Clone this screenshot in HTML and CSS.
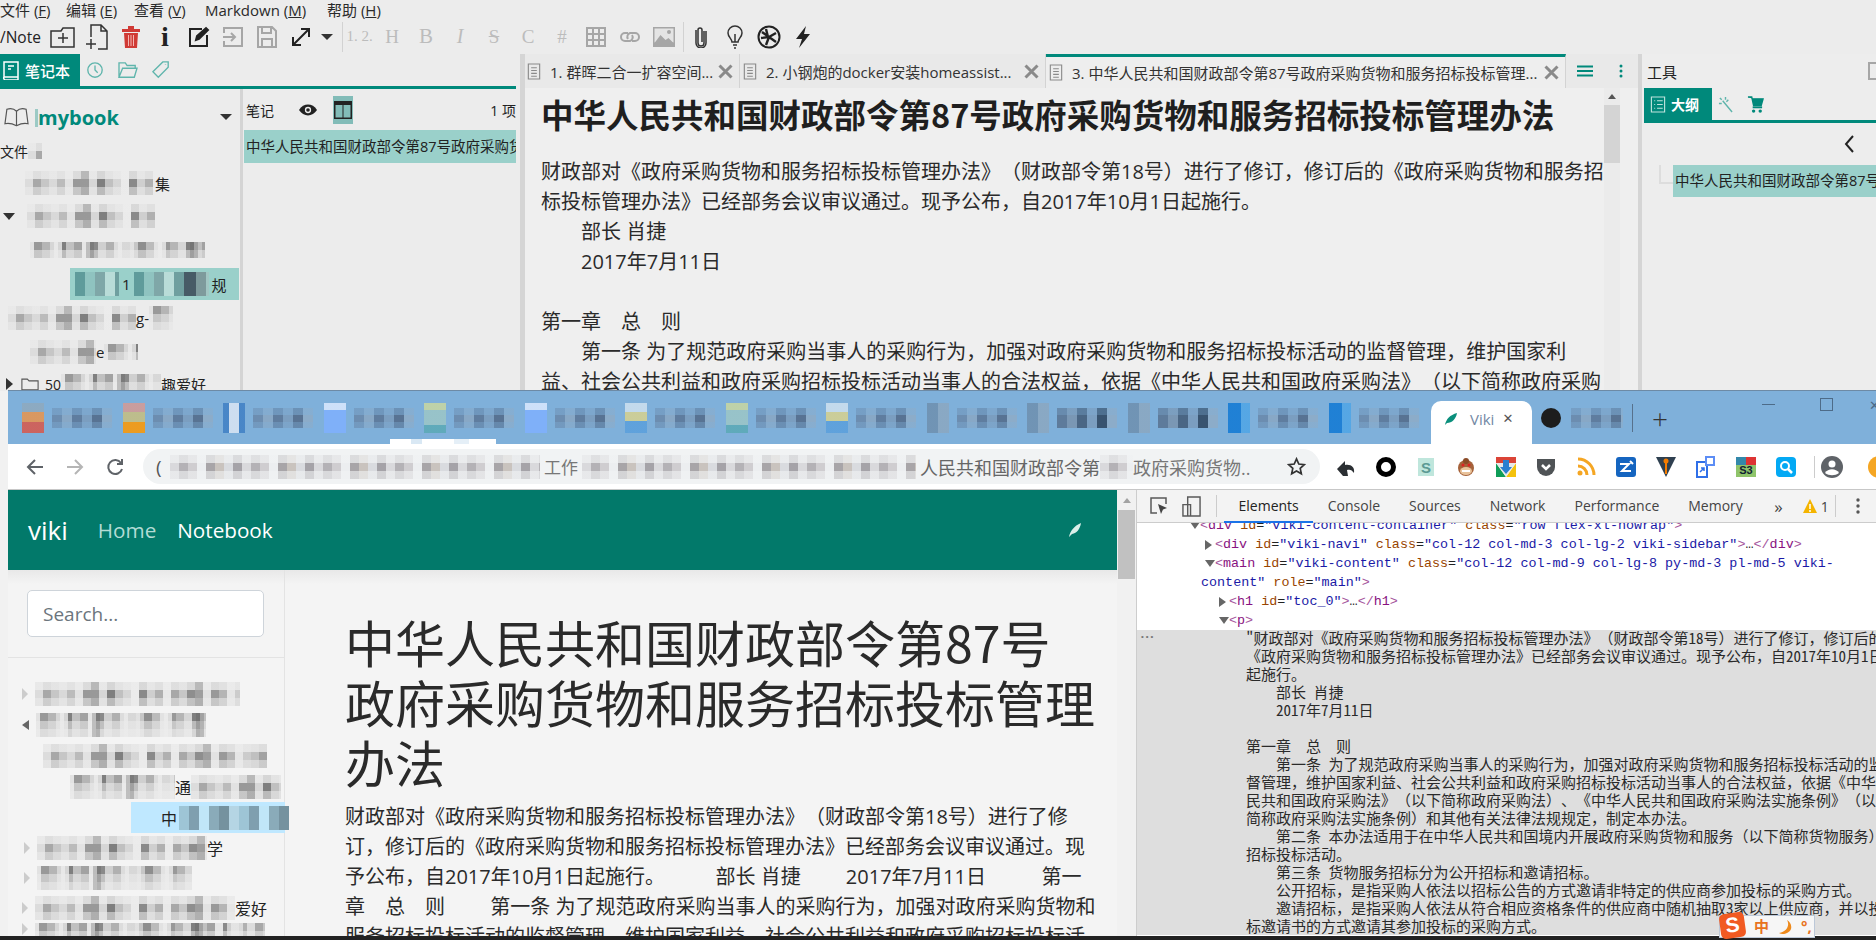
FILE: index.html
```html
<!DOCTYPE html>
<html lang="zh-CN">
<head>
<meta charset="utf-8">
<title>VNote and Viki</title>
<link rel="stylesheet" href="styles.css">
</head>
<body>
<section class="vnote">
  <div class="menubar">
    <span class="m1">文件 (<u>F</u>)</span><span class="m2">编辑 (<u>E</u>)</span><span class="m3">查看 (<u>V</u>)</span><span class="m4">Markdown (<u>M</u>)</span><span class="m5">帮助 (<u>H</u>)</span>
  </div>
  <div class="toolbar">
    <span class="appname">/Note</span>
    <span class="tb"><svg viewBox="0 0 26 22" width="26" height="22" class="ln"><path d="M1 5h10l2-3h11v19H1z M13 7v10M8 12h10"/></svg></span>
    <span class="tb"><svg viewBox="0 0 24 26" width="24" height="26" class="ln"><path d="M6 13V1h10l6 6v18h-9M16 1v6h6M1 20h10M6 15v10"/></svg></span>
    <span class="tb"><svg viewBox="0 0 20 24" width="20" height="24"><path d="M1 4h18v3H1zM7 1h6v3H7zM3 8h14l-1 15H4z" fill="#d03a35"/><path d="M7.500 10v11M10 10v11M12.500 10v11" stroke="#f3b5b2" stroke-width="1"/></svg></span>
    <span class="tb big-i">i</span>
    <span class="tb"><svg viewBox="0 0 22 22" width="22" height="22" class="ln2"><path d="M14 3H2v17h17V9"/><path d="M8 14l1-4 9-8 2 2-9 9z" fill="#222"/></svg></span>
    <span class="tb"><svg viewBox="0 0 22 22" width="22" height="22" class="gy"><path d="M2 7V2h18v18H2v-5M1 11h12M9 7l4 4-4 4"/></svg></span>
    <span class="tb"><svg viewBox="0 0 20 22" width="20" height="22" class="gy"><path d="M1 1h14l4 4v16H1zM5 1v6h9V1M5 21v-8h10v8"/></svg></span>
    <span class="tb"><svg viewBox="0 0 20 20" width="20" height="20" class="ln2"><path d="M3 17L17 3M10 2h8v8M2 10v8h8"/></svg></span>
    <span class="caret-box"><i class="caret"></i></span>
    <i class="tsep"></i>
    <span class="tb-w f12">1. 2.</span>
    <span class="tb fmt">H</span><span class="tb fmt fb">B</span><span class="tb fmt fi">I</span><span class="tb fmt"><span class="fs">S</span></span><span class="tb fmt">C</span><span class="tb fmt">#</span>
    <span class="tb"><svg viewBox="0 0 20 20" width="20" height="20" class="gy"><path d="M1 1h18v18H1zM7 1v18M13 1v18M1 7h18M1 13h18"/></svg></span>
    <span class="tb"><svg viewBox="0 0 20 12" width="20" height="12" class="gy"><path d="M8 2H5a4 4 0 000 8h5a4 4 0 002-6M12 10h3a4 4 0 000-8h-5a4 4 0 00-2 6"/></svg></span>
    <span class="tb"><svg viewBox="0 0 22 20" width="22" height="20"><rect width="22" height="20" fill="#a6a6a6"/><rect x="1.500" y="1.500" width="19" height="14" fill="#e4e4e4"/><path d="M1.500 16l6-8 5 5 3-2 5 5z" fill="#a6a6a6"/><circle cx="16" cy="5" r="2" fill="#a6a6a6"/></svg></span>
    <i class="tsep s2"></i>
    <span class="tb"><svg viewBox="0 0 12 22" width="12" height="22" class="ln"><path d="M9 5v12a3 3 0 01-6 0V4a2 2 0 014 0v12"/><path d="M11 5v12a5 5 0 01-10 0V4"/></svg></span>
    <span class="tb"><svg viewBox="0 0 16 24" width="16" height="24" class="ln"><path d="M5 17c0-3-4-5-4-9a7 7 0 0114 0c0 4-4 6-4 9zM6 20h4M7 23h2M8 17V9"/></svg></span>
    <span class="tb"><svg viewBox="0 0 24 24" width="24" height="24" class="ln2"><circle cx="12" cy="12" r="10.500"/><path d="M9 4l2 8M19 8l-7 4M19 17l-7-5M9 20l3-8M4 13l8-1M5 7l7 5" stroke-width="2.400"/></svg></span>
    <span class="tb"><svg viewBox="0 0 16 22" width="16" height="22"><path d="M11 0L1 13h6l-3 9 11-14H9z" fill="#222"/></svg></span>
  </div>
  <div class="vmain">
    <div class="nav-panel">
      <div class="dock-tabs">
        <span class="dock-on"><svg viewBox="0 0 18 20" width="18" height="20" class="wh"><path d="M2 17V2h14v18H4a2 2 0 01-2-3h14M6 6h6M6 9h3"/></svg>笔记本</span>
        <span class="dock-ic"><svg viewBox="0 0 20 20" width="18" height="18" class="tl"><circle cx="10" cy="10" r="8"/><path d="M10 5v5l3 3"/></svg></span>
        <span class="dock-ic"><svg viewBox="0 0 22 20" width="20" height="18" class="tl"><path d="M1 18V2h7l2 3h9v3M1 18h17l3-10H5z"/></svg></span>
        <span class="dock-ic"><svg viewBox="0 0 20 20" width="18" height="18" class="tl"><path d="M1 12L12 1h6v6L7 18zM15 4v.5"/></svg></span>
      </div>
      <div class="nav-cols">
        <div class="tree-col">
          <div class="nb-row">
            <svg viewBox="0 0 26 20" width="25" height="20" class="bk"><path d="M13 4c-3-3-7-3-10-2L1 17c4-1 8 0 12 2 4-2 8-3 12-2L23 2c-3-1-7-1-10 2zM13 4v15"/></svg>
            <span class="nb-name"><span class="nb-blur"></span>mybook</span>
            <i class="caret nb-caret"></i>
          </div>
          <div class="files-lb">文件<span class="mos m-files"></span></div>
          <div class="tr r1"><span class="mos w-r1"></span><span>集</span></div>
          <div class="tr r2"><i class="tri-d"></i><span class="mos w-r2"></span></div>
          <div class="tr r3"><span class="mos mos-b w-r3"></span></div>
          <div class="tr r4"><span class="sel-row"><span class="mos-teal w-a"></span><span>1</span><span class="mos-teal w-b"></span><span>规</span></span></div>
          <div class="tr r5"><span class="mos w-r5a"></span><span>g-</span><span class="mos mos-b w-r5b"></span></div>
          <div class="tr r6"><span class="mos w-r6a"></span><span>e</span><span class="mos mos-b w-r6b"></span></div>
          <div class="tr r7"><i class="tri-r"></i><svg viewBox="0 0 20 14" width="18" height="13" class="bk"><path d="M1 13V1h6l2 2h10v10z"/></svg><span class="t50">50</span><span class="mos mos-b w-r7"></span><span>趣爱好</span></div>
        </div>
        <div class="list-col">
          <div class="list-head">
            <span>笔记</span>
            <svg class="eye" viewBox="0 0 20 12" width="18" height="12"><path d="M0 6c5-8 15-8 20 0-5 8-15 8-20 0z" fill="#222"/><circle cx="10" cy="6" r="3.500" fill="#eee"/><circle cx="10" cy="6" r="2" fill="#222"/></svg>
            <span class="layout-ic"><svg viewBox="0 0 18 18" width="18" height="18"><rect x=".750" y=".750" width="16.500" height="16.500" fill="#82bcb8" stroke="#222" stroke-width="1.500"/><rect x="1" y="1" width="16" height="3" fill="#222"/><path d="M9 4v13" stroke="#222"/></svg></span>
            <span class="count">1 项</span>
          </div>
          <div class="note-item">中华人民共和国财政部令第87号政府采购货物和服务招标投标管理办法</div>
        </div>
      </div>
    </div>
    <div class="editor">
      <div class="ed-tabs">
        <div class="ed-tab t1"><svg viewBox="0 0 16 18" width="16" height="17" class="doc"><path d="M2 1h12v16H2zM5 5h6M5 8h6M5 11h6M5 14h6"/></svg><span class="ed-t">1. 群晖二合一扩容空间...</span><svg class="close" viewBox="0 0 15 15" width="15" height="15"><path d="M1.500 1.500l12 12M13.500 1.500l-12 12"/></svg></div>
        <div class="ed-tab t2"><svg viewBox="0 0 16 18" width="16" height="17" class="doc"><path d="M2 1h12v16H2zM5 5h6M5 8h6M5 11h6M5 14h6"/></svg><span class="ed-t">2. 小钢炮的docker安装homeassist...</span><svg class="close" viewBox="0 0 15 15" width="15" height="15"><path d="M1.500 1.500l12 12M13.500 1.500l-12 12"/></svg></div>
        <div class="ed-tab t3"><svg viewBox="0 0 16 18" width="16" height="17" class="doc"><path d="M2 1h12v16H2zM5 5h6M5 8h6M5 11h6M5 14h6"/></svg><span class="ed-t">3. 中华人民共和国财政部令第87号政府采购货物和服务招标投标管理...</span><svg class="close" viewBox="0 0 15 15" width="15" height="15"><path d="M1.500 1.500l12 12M13.500 1.500l-12 12"/></svg></div>
        <svg class="ham" viewBox="0 0 16 12" width="16" height="12"><path d="M0 1.500h16M0 6h16M0 10.500h16" stroke="#00897b" stroke-width="2"/></svg>
        <svg class="keb" viewBox="0 0 4 14" width="4" height="14"><circle cx="2" cy="2" r="1.500" fill="#00897b"/><circle cx="2" cy="7" r="1.500" fill="#00897b"/><circle cx="2" cy="12" r="1.500" fill="#00897b"/></svg>
      </div>
      <div class="ed-body">
        <div class="ed-doc">
          <h1 class="ed-h1">中华人民共和国财政部令第87号政府采购货物和服务招标投标管理办法</h1>
          <div class="ed-text">财政部对《政府采购货物和服务招标投标管理办法》（财政部令第18号）进行了修订，修订后的《政府采购货物和服务招标投标管理办法》已经部务会议审议通过。现予公布，自2017年10月1日起施行。
　　部长 肖捷
　　2017年7月11日

第一章　总　则
　　第一条 为了规范政府采购当事人的采购行为，加强对政府采购货物和服务招标投标活动的监督管理，维护国家利<br>益、社会公共利益和政府采购招标投标活动当事人的合法权益，依据《中华人民共和国政府采购法》（以下简称政府采购</div>
        </div>
        <div class="ed-scroll"><i class="arrow-up"></i><i class="thumb"></i></div>
      </div>
    </div>
    <aside class="tools">
      <div class="tools-head"><span>工具</span><svg viewBox="0 0 8 18" width="8" height="18" class="gy"><path d="M8 1H1v16h7"/></svg></div>
      <div class="tools-tabs">
        <span class="dock-on out"><svg viewBox="0 0 16 18" width="16" height="17" class="wh1"><path d="M1 1h14v16H1zM4 5h1M7 5h6M4 9h1M7 9h6M4 13h1M7 13h6"/></svg>大纲</span>
        <span class="dock-ic sm"><svg viewBox="0 0 16 18" width="15" height="17" class="tl"><path d="M5 5l10 12M2 2l2 2M8 1v3M1 8h3M11 4L9 6"/></svg></span>
        <span class="dock-ic sm"><svg viewBox="0 0 18 18" width="17" height="17"><path d="M1 1h4l2 9h8l2-7H6" fill="#00897b" stroke="#00897b" stroke-width="1.500"/><path d="M6 12h10" stroke="#00897b" stroke-width="2"/><circle cx="7" cy="16" r="1.800" fill="#00897b"/><circle cx="14" cy="16" r="1.800" fill="#00897b"/></svg></span>
      </div>
      <div class="chev-row"><svg viewBox="0 0 12 20" width="12" height="20" class="chev"><path d="M10 2L3 10l7 8"/></svg></div>
      <div class="out-item"><i class="out-line"></i><span class="out-t">中华人民共和国财政部令第87号政府采购货物和服务招标投标管理办法</span></div>
    </aside>
  </div>
</section>

<section class="chrome">
  <div class="tabstrip">
    <div class="ctab"><i class="fav fo"></i><span class="mos-blue"></span></div>
    <div class="ctab"><i class="fav fy"></i><span class="mos-blue"></span></div>
    <div class="ctab"><i class="fav fb1"></i><span class="mos-blue"></span></div>
    <div class="ctab"><i class="fav fl"></i><span class="mos-blue"></span></div>
    <div class="ctab"><i class="fav fg"></i><span class="mos-blue"></span></div>
    <div class="ctab"><i class="fav fl"></i><span class="mos-blue"></span></div>
    <div class="ctab"><i class="fav fw"></i><span class="mos-blue"></span></div>
    <div class="ctab"><i class="fav fg"></i><span class="mos-blue"></span></div>
    <div class="ctab"><i class="fav fw"></i><span class="mos-blue"></span></div>
    <div class="ctab"><i class="fav fn"></i><span class="mos-blue"></span></div>
    <div class="ctab"><i class="fav fn"></i><span class="mos-blue dk"></span></div>
    <div class="ctab"><i class="fav fn"></i><span class="mos-blue dk"></span></div>
    <div class="ctab"><i class="fav fb2"></i><span class="mos-blue"></span></div>
    <div class="ctab"><i class="fav fb2"></i><span class="mos-blue"></span></div>
    <div class="ctab-active">
      <svg viewBox="0 0 14 14" width="14" height="14"><path d="M1 13c1-6 5-10 12-12-1 6-5 10-10 10z" fill="#0a8f7c"/></svg>
      <span class="viki-t">Viki</span><span class="viki-x">✕</span>
    </div>
    <div class="ctab-next"><i class="gh"></i><span class="mos-blue"></span></div>
    <i class="strip-sep"></i>
    <span class="newtab">+</span>
    <i class="win-min"></i>
    <i class="win-max"></i>
    <span class="win-x">✕</span>
    <i class="smear"></i>
  </div>
  <div class="ctoolbar">
    <span class="nv"><svg viewBox="0 0 18 18" width="18" height="18" class="nvs"><path d="M17 9H2M9 2L2 9l7 7"/></svg></span>
    <span class="nv"><svg viewBox="0 0 18 18" width="18" height="18" class="nvl"><path d="M1 9h15M9 2l7 7-7 7"/></svg></span>
    <span class="nv"><svg viewBox="0 0 18 18" width="18" height="18" class="nvs"><path d="M15 5a7 7 0 101 6M16 1v5h-5"/></svg></span>
    <div class="omnibox">
      <span class="globe">(</span>
      <span class="mos-url u1"></span><span class="url-t">工作</span><span class="mos-url u2"></span><span class="url-k">人民共和国财政部令第</span><span class="mos-url u3"></span><span class="url-t2">政府采购货物..</span>
      <svg class="star" viewBox="0 0 20 20" width="19" height="19"><path d="M10 2l2.400 5.400 5.800.6-4.300 3.900 1.200 5.700L10 14.700l-5.100 2.900 1.200-5.700L1.800 8l5.800-.6z" fill="none" stroke="#333" stroke-width="1.800"/></svg>
    </div>
    <span class="ext first"><svg viewBox="0 0 20 20" width="20" height="20"><path d="M1 12L9 4v4c6-1 10 2 9 8-2-3-4-4-7-3l1 6H7z" fill="#2b2f33"/></svg></span>
    <span class="ext"><svg viewBox="0 0 20 20" width="20" height="20"><circle cx="10" cy="10" r="7.500" fill="none" stroke="#000" stroke-width="5"/></svg></span>
    <span class="ext"><svg viewBox="0 0 20 20" width="20" height="20"><rect x="2" y="1" width="16" height="18" fill="#bfe6dc"/><text x="10" y="16" class="ext-s">S</text></svg></span>
    <span class="ext"><svg viewBox="0 0 20 20" width="20" height="20"><circle cx="10" cy="11" r="8" fill="#a5623a"/><circle cx="10" cy="4" r="3" fill="#8a4a26"/><ellipse cx="10" cy="14" rx="6" ry="4" fill="#e9c39b"/><circle cx="7" cy="8" r="1.500" fill="#d22"/><circle cx="13" cy="8" r="1.500" fill="#d22"/><path d="M6 14h8" stroke="#fff" stroke-width="2"/></svg></span>
    <span class="ext"><svg viewBox="0 0 20 20" width="20" height="20"><path d="M0 0h20v6H0z" fill="#db4437"/><path d="M0 6l0 14h10z" fill="#0f9d58"/><path d="M20 6v14H10z" fill="#f4c20d"/><path d="M10 20L0 6h20z" fill="#e8e8e8"/><path d="M7 3h6v7h3l-6 7-6-7h3z" fill="#2a7fd0"/></svg></span>
    <span class="ext"><svg viewBox="0 0 20 20" width="20" height="20"><path d="M1 2h18v8a9 9 0 01-18 0z" fill="#4f5356"/><path d="M6 8l4 4 4-4" fill="none" stroke="#fff" stroke-width="2.500"/></svg></span>
    <span class="ext"><svg viewBox="0 0 20 20" width="20" height="20"><g fill="none" stroke="#f5a623" stroke-width="3"><path d="M2 2a16 16 0 0116 16"/><path d="M2 9a9 9 0 019 9"/></g><circle cx="4" cy="16" r="2.500" fill="#f5a623"/></svg></span>
    <span class="ext"><svg viewBox="0 0 20 20" width="20" height="20"><rect width="20" height="20" rx="3" fill="#1565c0"/><path d="M4 7h9L6 14h9M14 4l3 3" fill="none" stroke="#fff" stroke-width="2"/></svg></span>
    <span class="ext"><svg viewBox="0 0 20 22" width="20" height="22"><path d="M0 1h20L10 21z" fill="#2f4050"/><circle cx="10" cy="5" r="2.500" fill="#f57c00"/><path d="M10 6v12" stroke="#f57c00" stroke-width="2"/></svg></span>
    <span class="ext"><svg viewBox="0 0 20 22" width="20" height="22"><path d="M1 6h10v15H1z" fill="#fff" stroke="#2f6fe8" stroke-width="2"/><rect x="10" y="1" width="8" height="8" fill="#fff" stroke="#5c8df5" stroke-width="2"/><path d="M4 16l4-4M5 12h3v3" fill="none" stroke="#2f6fe8" stroke-width="1.500"/></svg></span>
    <span class="ext"><svg viewBox="0 0 20 20" width="20" height="20"><rect width="20" height="20" fill="#8fc46a"/><rect x="10" width="10" height="8" fill="#d33"/><rect width="10" height="8" fill="#38a"/><text x="10" y="17" class="ext-s3">S3</text></svg></span>
    <span class="ext"><svg viewBox="0 0 20 20" width="20" height="20"><rect width="20" height="20" rx="4" fill="#03a9f4"/><circle cx="9" cy="9" r="4" fill="none" stroke="#fff" stroke-width="2"/><path d="M12 12l4 4" stroke="#fff" stroke-width="2.500"/></svg></span>
    <i class="ext-sep"></i>
    <span class="avatar"><svg viewBox="0 0 22 22" width="22" height="22"><circle cx="11" cy="11" r="11" fill="#5f6368"/><circle cx="11" cy="8" r="3.500" fill="#fff"/><path d="M4 17c3-5 11-5 14 0-4 3-10 3-14 0z" fill="#fff"/></svg></span>
    <i class="orange"></i>
  </div>
  <div class="cmain">
    <div class="page">
      <header class="viki-head">
        <span class="brand">viki</span><span class="nlink">Home</span><span class="nlink on">Notebook</span>
        <svg class="feather" viewBox="0 0 14 16" width="14" height="16"><path d="M1 15c1-6 5-11 12-14-1 6-4 10-9 11z" fill="#dbeee9"/></svg>
      </header>
      <div class="page-body">
        <nav class="side">
          <div class="search-wrap"><div class="search">Search...</div></div>
          <div class="stree">
            <div class="st s1"><i class="t-o"></i><span class="mos w1"></span></div>
            <div class="st s1"><i class="t-d"></i><span class="mos mos-b w2"></span></div>
            <div class="st s1"><span class="mos w3"></span></div>
            <div class="st s1"><span class="mos mos-b w4a"></span><span>通</span><span class="mos w4b"></span></div>
            <div class="st s1"><span class="sky-row"><span>中</span><span class="mos-sky"></span></span></div>
            <div class="st s2"><i class="t-o"></i><span class="mos w6a"></span><span>学</span></div>
            <div class="st s2"><i class="t-o"></i><span class="mos mos-b w7"></span></div>
            <div class="st s3"><i class="t-o"></i><span class="mos w8"></span><span>爱好</span></div>
            <div class="st s4"><i class="t-o"></i><span class="mos mos-b w9"></span></div>
          </div>
        </nav>
        <main class="article">
          <h1 class="art-h1">中华人民共和国财政部令第87号政府采购货物和服务招标投标管理办法</h1>
          <p class="art-p">财政部对《政府采购货物和服务招标投标管理办法》（财政部令第18号）进行了修订，修订后的《政府采购货物和服务招标投标管理办法》已经部务会议审议通过。现予公布，自2017年10月1日起施行。　　&nbsp;&nbsp;部长 肖捷　　&nbsp;2017年7月11日　　&nbsp;&nbsp;&nbsp;第一章　总　则　　&nbsp;第一条 为了规范政府采购当事人的采购行为，加强对政府采购货物和服务招标投标活动的监督管理，维护国家利益、社会公共利益和政府采购招标投标活动当事人的合法权益</p>
        </main>
      </div>
    </div>
    <div class="pscroll"><i class="arrow-up"></i><i class="pthumb"></i></div>
    <div class="devtools">
      <div class="dt-bar">
        <svg class="dt-i1" viewBox="0 0 20 20" width="20" height="20"><path d="M8 17H2V2h15v6" fill="none" stroke="#5a5a5a" stroke-width="1.500"/><path d="M9 8l9 4-4 1.500L12 18z" fill="#444"/></svg>
        <svg class="dt-i2" viewBox="0 0 20 22" width="19" height="21"><path d="M6 1h13v20H6zM1 9h8v12H1z" fill="#f3f3f3" stroke="#5a5a5a" stroke-width="1.500"/></svg>
        <i class="dt-sep"></i>
        <span class="dt-tab on">Elements</span><span class="dt-tab">Console</span><span class="dt-tab">Sources</span><span class="dt-tab">Network</span><span class="dt-tab">Performance</span><span class="dt-tab">Memory</span>
        <span class="dt-more">»</span>
        <svg class="dt-warn" viewBox="0 0 14 14" width="14" height="14"><path d="M7 0l7 14H0z" fill="#f4b400"/><path d="M7 5v5M7 11v2" stroke="#fff" stroke-width="1.500"/></svg>
        <span class="dt-num">1</span><i class="dt-sep s2"></i>
        <svg class="dt-keb" viewBox="0 0 4 16" width="4" height="16"><circle cx="2" cy="2" r="1.700" fill="#555"/><circle cx="2" cy="8" r="1.700" fill="#555"/><circle cx="2" cy="14" r="1.700" fill="#555"/></svg>
      </div>
      <div class="dom">
        <div class="dl d0"><i class="dt-d"></i><b>&lt;</b><em>div</em> <s>id</s>=<q>"viki-content-container"</q> <s>class</s>=<q>"row flex-xl-nowrap"</q><b>&gt;</b></div>
        <div class="dl d1"><i class="dt-r"></i><b>&lt;</b><em>div</em> <s>id</s>=<q>"viki-navi"</q> <s>class</s>=<q>"col-12 col-md-3 col-lg-2 viki-sidebar"</q><b>&gt;</b>…<b>&lt;/</b><em>div</em><b>&gt;</b></div>
        <div class="dl d1"><i class="dt-d"></i><b>&lt;</b><em>main</em> <s>id</s>=<q>"viki-content"</q> <s>class</s>=<q>"col-12 col-md-9 col-lg-8 py-md-3 pl-md-5 viki-</q></div>
        <div class="dl dwrap"><q>content"</q> <s>role</s>=<q>"main"</q><b>&gt;</b></div>
        <div class="dl d2"><i class="dt-r"></i><b>&lt;</b><em>h1</em> <s>id</s>=<q>"toc_0"</q><b>&gt;</b>…<b>&lt;/</b><em>h1</em><b>&gt;</b></div>
        <div class="dl d2"><i class="dt-d"></i><b>&lt;</b><em>p</em><b>&gt;</b></div>
        <div class="dom-sel"><span class="dots">•••</span><div class="sel-text">"财政部对《政府采购货物和服务招标投标管理办法》（财政部令第18号）进行了修订，修订后的
《政府采购货物和服务招标投标管理办法》已经部务会议审议通过。现予公布，自2017年10月1日
起施行。
    部长 肖捷
    2017年7月11日

第一章　总　则
    第一条 为了规范政府采购当事人的采购行为，加强对政府采购货物和服务招标投标活动的监
督管理，维护国家利益、社会公共利益和政府采购招标投标活动当事人的合法权益，依据《中华人
民共和国政府采购法》（以下简称政府采购法）、《中华人民共和国政府采购法实施条例》（以下
简称政府采购法实施条例）和其他有关法律法规规定，制定本办法。
    第二条 本办法适用于在中华人民共和国境内开展政府采购货物和服务（以下简称货物服务）
招标投标活动。
    第三条 货物服务招标分为公开招标和邀请招标。
    公开招标，是指采购人依法以招标公告的方式邀请非特定的供应商参加投标的采购方式。
    邀请招标，是指采购人依法从符合相应资格条件的供应商中随机抽取3家以上供应商，并以投
标邀请书的方式邀请其参加投标的采购方式。</div></div>
      </div>
    </div>
  </div>
</section>

<div class="taskbar"></div>
<div class="ime"><span class="ime-s">S</span><span class="ime-z">中</span><svg viewBox="0 0 14 14" width="14" height="14"><path d="M9 0c3 5 0 12-8 13 3 2 10 1 12-4 1-4-1-7-4-9z" fill="#ee8a1c"/></svg><span class="ime-d">°,</span></div>
</body>
</html>
```
FILE: styles.css
```css
* { box-sizing: border-box; }
html, body { margin: 0; padding: 0; }
body {
  position: relative;
  width: 1876px;
  height: 940px;
  overflow: hidden;
  background: #f1f1f1;
  color: #222;
  font-family: "Open Sans", "Noto Sans CJK SC", sans-serif;
  text-spacing-trim: space-all;
}
i { display: block; font-style: normal; }

/* ---------- VNote window ---------- */
.vnote { height: 391px; overflow: hidden; background: #ececec; }
.menubar { height: 19px; display: flex; align-items: center; font-size: 15px; white-space: pre; color: #2a2a2a; }
.menubar span { display: block; }
.m1 { width: 66px; }
.m2 { width: 68px; }
.m3 { width: 71px; }
.m4 { width: 122px; }

.toolbar { height: 35px; display: flex; align-items: center; }
.appname { width: 46px; font-size: 15.500px; }
.tb { width: 34px; height: 32px; display: flex; align-items: center; justify-content: center; flex: none; }
.ln, .ln2, .gy, .bk, .tl, .wh, .wh1, .doc, .chev { fill: none; }
.ln { stroke: #333; stroke-width: 1.500; }
.ln2 { stroke: #222; stroke-width: 2; }
.gy { stroke: #a6a6a6; stroke-width: 2; }
.bk { stroke: #555; stroke-width: 1.200; }
.tl { stroke: #5fb5ac; stroke-width: 1.500; }
.wh { stroke: #fff; stroke-width: 1.500; }
.wh1 { stroke: #bfe3de; stroke-width: 1.200; }
.doc { stroke: #8a8a8a; stroke-width: 1.200; }
.big-i { font: bold 28px "Liberation Serif", serif; color: #222; }
.caret { width: 0; height: 0; border-left: 6px solid transparent; border-right: 6px solid transparent; border-top: 6px solid #333; }
.caret-box { width: 12px; margin-left: 3px; margin-right: 9px; flex: none; }
.tsep { width: 1px; height: 30px; background: #d2d2d2; flex: none; }
.tb-w { margin-right: -1px; flex: none; text-align: center; }
.f12 { font: 15px "Liberation Serif", serif; color: #bcbcbc; width: 33px; }
.fmt { font: 19px "Liberation Serif", serif; color: #bcbcbc; }
.fb { font-size: 21px; }
.fi { font-style: italic; font-size: 20px; }
.fs { text-decoration: line-through; }
.s2 { margin-left: 2px; }

.vmain { display: flex; height: 337px; }
.nav-panel { width: 520px; flex: none; }
.dock-tabs { width: 516px; height: 35px; border-bottom: 3px solid #00897b; display: flex; align-items: stretch; }
.dock-on { width: 80px; background: #00897b; color: #fff; font-size: 15px; font-weight: 500; display: flex; align-items: center; gap: 5px; padding-left: 2px; flex: none; }
.dock-ic { width: 33px; display: flex; align-items: center; justify-content: center; }
.dock-on + .dock-ic { margin-left: -2px; }
.nav-cols { display: flex; height: 302px; width: 516px; }
.tree-col { width: 240px; flex: none; font-size: 15px; }
.nb-row { height: 42px; display: flex; align-items: center; padding: 14px 8px 0 4px; }
.nb-name { margin-left: 6px; font-size: 20px; font-weight: 700; color: #00897b; flex: 1; }
.nb-blur { display: inline-block; width: 3px; height: 18px; background: #9ccac5; vertical-align: -2px; }
.files-lb { height: 35px; padding-top: 4px; display: flex; align-items: center; font-size: 14px; }

.mos {
  display: block;
  flex: none;
  height: 24px;
  background-image:
    linear-gradient(90deg, rgba(236,236,236,0) 0 24px, rgba(236,236,236,.8) 24px 32px, rgba(236,236,236,0) 32px 56px, rgba(90,90,90,.3) 56px 64px, rgba(236,236,236,0) 64px 88px, rgba(236,236,236,.7) 88px 104px),
    linear-gradient(180deg, rgba(236,236,236,.8) 0 8px, rgba(236,236,236,0) 8px 16px, rgba(236,236,236,.55) 16px 24px),
    linear-gradient(90deg, #dcdcdc 0 8px, #a8a8a8 8px 16px, #c6c6c6 16px 24px, #8e8e8e 24px 32px, #bbb 32px 40px, #e2e2e2 40px 48px, #999 48px 56px, #b5b5b5 56px 64px, #d6d6d6 64px 72px, #7f7f7f 72px 80px, #c0c0c0 80px 88px, #a2a2a2 88px 96px, #e6e6e6 96px 104px, #8a8a8a 104px 112px, #cfcfcf 112px 120px, #b0b0b0 120px 128px);
  background-size: 104px 100%, 100% 24px, 128px 100%;
}
.mos-b { background-position: 0 0, 0 -8px, -44px 0; }
.m-files { width: 14px; height: 16px; }
.tr { display: flex; align-items: center; font-size: 15px; }
.r1 { height: 34px; padding-left: 25px; }
.r2 { height: 32px; padding-left: 3px; }
.r3 { height: 36px; padding-left: 30px; }
.r4 { height: 32px; padding-left: 70px; align-items: stretch; }
.r5 { height: 36px; padding-left: 8px; }
.r6 { height: 32px; padding-left: 30px; }
.r7 { height: 32px; padding-left: 3px; }
.w-r1 { width: 130px; }
.w-r2 { width: 128px; margin-left: 12px; }
.w-r3 { width: 175px; height: 16px; }
.w-r5a { width: 128px; }
.w-r5b { width: 24px; }
.w-r6a { width: 66px; }
.w-r6b { width: 34px; height: 16px; }
.w-r7 { width: 100px; height: 20px; }
.t50 { margin-left: 6px; font-size: 14px; }
.tri-d { width: 0; height: 0; border-left: 6px solid transparent; border-right: 6px solid transparent; border-top: 7px solid #333; }
.tri-r { width: 0; height: 0; border-top: 6px solid transparent; border-bottom: 6px solid transparent; border-left: 7px solid #333; margin-right: 8px; margin-left: 3px; }
.sel-row { width: 169px; background: #9ad0ca; display: flex; align-items: center; padding-left: 5px; }
.mos-teal {
  display: block;
  height: 24px;
  flex: none;
  background-image: linear-gradient(90deg, #5f9b9b 0 10px, #8fc3c0 10px 20px, #7fa7a8 20px 30px, #b9dcd8 30px 40px, #6f9f9f 40px 50px, #475b66 50px 62px, #7e9a9c 62px 72px, #a2c6c3 72px 82px);
  background-size: 82px 100%;
}
.w-a { width: 44px; margin-right: 3px; }
.w-b { width: 75px; margin: 0 3px; }

.list-col { flex: 1; min-width: 0; border-left: 3px solid #d4d4d4; padding-left: 1px; font-size: 14px; }
.list-head { display: flex; align-items: center; padding: 0 0 0 2px; margin-top: 3px; margin-bottom: 3px; height: 35px; }
.eye { margin-left: 25px; }
.layout-ic { width: 20px; height: 28px; background: #82bcb8; margin-left: 16px; display: flex; align-items: center; justify-content: center; }
.count { margin-left: auto; }
.note-item { height: 33px; margin-top: 3px; background: #9ad0ca; line-height: 33px; white-space: nowrap; overflow: hidden; padding-left: 2px; font-size: 14.500px; }

.editor { width: 1120px; flex: none; border-left: 5px solid #d5d5d5; }
.ed-tabs { height: 34px; background: #e9e9e9; display: flex; align-items: stretch; }
.ed-tab { display: flex; align-items: center; border-right: 1px solid #d3d3d3; font-size: 15px; color: #333; white-space: nowrap; overflow: hidden; flex: none; padding-left: 1px; }
.ed-t { margin-left: 8px; flex: 1; overflow: hidden; }
.t1 { width: 215px; }
.t2 { width: 306px; padding-left: 2px; }
.t3 { width: 520px; background: #eee; border-top: 3px solid #00897b; padding-left: 2px; }
.close { fill: none; stroke: #8a8a8a; stroke-width: 3; margin-right: 6px; flex: none; }
.ham { margin: auto 0 auto 11px; }
.keb { margin: auto 0 auto 26px; }
.ed-body { display: flex; height: 303px; background: #efefef; }
.ed-doc { width: 1079px; flex: none; padding: 2px 14px 0 16px; overflow: hidden; }
.ed-h1 { margin: 0 0 19px; font-size: 32.500px; line-height: 48px; font-weight: 700; white-space: nowrap; color: #1f1f1f; font-family: "Noto Sans CJK SC", sans-serif; }
.ed-text { font-size: 20px; line-height: 30px; white-space: pre-wrap; color: #2a2a2a; width: 1066px; }
.ed-scroll { width: 16px; flex: none; background: #ebebeb; }
.arrow-up { width: 0; height: 0; margin: 6px auto 6px; border-left: 4px solid transparent; border-right: 4px solid transparent; border-bottom: 5px solid #555; }
.thumb { height: 58px; background: #d4d4d4; }

.tools { flex: 1; min-width: 0; border-left: 4px solid #d5d5d5; margin-left: -2px; background: #ededed; }
.tools-head { height: 34px; display: flex; align-items: center; justify-content: space-between; padding: 0 0 0 5px; font-size: 15px; }
.tools-tabs { height: 35px; margin-left: 2px; border-bottom: 3px solid #00897b; display: flex; }
.out { width: 68px; gap: 5px; padding-left: 6px; font-size: 14px; font-weight: 700; }
.sm { width: 30px; }
.chev-row { height: 42px; display: flex; justify-content: flex-end; align-items: center; padding-right: 21px; }
.chev { stroke: #222; stroke-width: 2; }
.out-item { display: flex; height: 32px; padding-left: 17px; }
.out-line { width: 14px; height: 19px; border-left: 2px solid #ddd; border-bottom: 2px solid #ddd; flex: none; }
.out-t { background: #9ad0ca; flex: 1; min-width: 0; overflow: hidden; white-space: nowrap; line-height: 32px; font-size: 14.500px; padding-left: 2px; }

/* ---------- Chrome window ---------- */
.chrome {
  position: absolute;
  left: 8px;
  top: 390px;
  width: 1868px;
  height: 546px;
  overflow: hidden;
  border-top: 1px solid #6d8aa5;
  background: #fff;
}
.tabstrip { height: 53px; background: #7fb0da; display: flex; align-items: center; padding-left: 14px; position: relative; }
.smear { position: absolute; left: 382px; bottom: 0; width: 106px; height: 5px; background: linear-gradient(90deg, #fff 0 20%, #d9e8f4 20% 30%, #fff 30% 60%, #e5eff7 60% 75%, #fff 75%); }
.ctab { width: 100.500px; flex: none; display: flex; align-items: center; gap: 8px; height: 30px; }
.fav { width: 22px; height: 30px; flex: none; opacity: .85; }
.fo { background: linear-gradient(180deg, #8fa9bd 0 30%, #e8944c 30% 65%, #d9574a 65%); }
.fy { background: linear-gradient(180deg, #d59a94 0 30%, #c8bf7f 30% 65%, #ff9800 65%); }
.fb1 { background: linear-gradient(90deg, #3f7fc4 0 25%, #dbe6f4 25% 75%, #3f7fc4 75%); }
.fl { background: linear-gradient(180deg, #dbe9ff 0 25%, #7fb0ff 25% 100%); }
.fg { background: linear-gradient(180deg, #c9d7a0 0 25%, #9cc6c6 25% 75%, #5aa9b5 75%); }
.fw { background: linear-gradient(180deg, #cfe1ef 0 30%, #d8d28e 30% 60%, #5a9fdc 60%); }
.fn { background: linear-gradient(90deg, #6e8fae 0 50%, #8ba7c0 50%); }
.fb2 { background: linear-gradient(90deg, #0f78d4 0 60%, #4ea5e6 60%); }
.mos-blue {
  display: block;
  width: 60px;
  height: 20px;
  flex: none;
  background-image:
    linear-gradient(180deg, rgba(127,176,218,.5) 0 7px, rgba(127,176,218,0) 7px 14px, rgba(127,176,218,.35) 14px),
    linear-gradient(90deg, #6c8db0 0 10px, #88a8c6 10px 20px, #5f7d9f 20px 30px, #7b9ec0 30px 40px, #587393 40px 50px, #8cacc9 50px 60px);
}
.dk { background-image:
    linear-gradient(180deg, rgba(127,176,218,.3) 0 7px, rgba(127,176,218,0) 7px),
    linear-gradient(90deg, #5e7b9b 0 10px, #7a97b4 10px 20px, #4a6684 20px 30px, #7b9ec0 30px 40px, #38536f 40px 50px, #8cacc9 50px 60px); }
.ctab-active { width: 101px; height: 43px; margin-left: 2px; margin-top: 10px; background: #fff; border-radius: 10px 10px 0 0; display: flex; align-items: center; padding: 0 0 8px 13px; font-size: 15px; flex: none; }
.viki-t { margin-left: 12px; color: #7288a4; }
.viki-x { margin-left: 8px; font-size: 13px; color: #555; font-family: "DejaVu Sans", sans-serif; }
.ctab-next { width: 100px; display: flex; align-items: center; gap: 6px; padding-left: 9px; flex: none; }
.gh { width: 20px; height: 20px; border-radius: 50%; background: #1d1d1d; flex: none; }
.ctab-next .mos-blue { width: 52px; margin-left: 4px; }
.strip-sep { width: 1px; height: 28px; background: #57718c; flex: none; }
.newtab { width: 54px; text-align: center; font-size: 28px; line-height: 28px; color: #333; font-weight: 300; flex: none; }
.win-min { width: 13px; height: 1px; background: #4d6b88; margin-left: 75px; margin-bottom: 26px; flex: none; }
.win-max { width: 13px; height: 13px; border: 1px solid #4d6b88; margin-left: 45px; margin-bottom: 26px; flex: none; }
.win-x { margin-left: 36px; margin-bottom: 26px; font-size: 13px; color: #4d6b88; flex: none; }

.ctoolbar { height: 46px; display: flex; align-items: center; padding-left: 7px; border-bottom: 1px solid #c7c7c7; background: #fff; }
.nv { width: 40px; display: flex; justify-content: center; flex: none; }
.nvs, .nvl { fill: none; stroke-width: 2; }
.nvs { stroke: #5f6368; }
.nvl { stroke: #b5b5b5; }
.omnibox { width: 1177px; height: 35px; margin-left: 8px; border-radius: 18px; background: #f1f3f4; display: flex; align-items: center; padding: 0 0 0 13px; flex: none; overflow: hidden; font-size: 18px; color: #555; white-space: nowrap; }
.globe { width: 14px; flex: none; color: #555; font-size: 19px; }
.mos-url { display: block; height: 24px; flex: none;
  background-image:
    linear-gradient(180deg, rgba(241,243,244,.7) 0 8px, rgba(241,243,244,0) 8px 16px, rgba(241,243,244,.6) 16px),
    linear-gradient(90deg, #d9d9dc 0 9px, #b4b2b6 9px 18px, #cfcdd0 18px 27px, #eceef0 27px 36px, #a8a5a8 36px 45px, #c9c3be 45px 54px, #d9dbdf 54px 63px, #a5a3a8 63px 72px);
  background-size: 100% 100%, 72px 100%;
}
.u1 { width: 370px; }
.url-t { margin: 0 4px; color: #777; font-size: 17px; }
.u2 { width: 334px; }
.url-k { margin: 0 0 0 4px; color: #666; }
.u3 { width: 33px; }
.url-t2 { color: #777; width: 122px; overflow: hidden; flex: none; }
.star { margin-left: auto; margin-right: 14px; flex: none; }
.ext { width: 40px; display: flex; justify-content: center; flex: none; }
.ext.first { margin-left: 6px; }
.ext-s { font: bold 15px "Liberation Sans", sans-serif; fill: #5b9a93; text-anchor: middle; }
.ext-s3 { font: bold 11px "Liberation Sans", sans-serif; fill: #123; text-anchor: middle; }
.ext-sep { width: 1px; height: 22px; background: #ccc; margin-left: 8px; flex: none; }
.avatar { width: 34px; display: flex; justify-content: center; flex: none; }
.orange { width: 22px; height: 22px; border-radius: 50%; background: #f5a623; margin-left: 19px; flex: none; }

.cmain { display: flex; height: 446px; }
.page { width: 1109px; flex: none; background: #f3f3f3; overflow: hidden; }
.viki-head { height: 80px; background: #02796a; display: flex; align-items: center; padding-left: 20px; color: #fff; }
.brand { font-size: 26px; margin-right: 30px; }
.nlink { font-size: 20.700px; margin-right: 21px; color: #b3dcd5; }
.nlink.on { color: #fff; }
.feather { margin-left: auto; margin-right: 35px; }
.page-body { display: flex; height: 366px; background: linear-gradient(180deg, #e8e8e8 0, #f4f4f4 14px); }
.side { width: 277px; flex: none; border-right: 1px solid #e3e3e3; }
.search-wrap { height: 88px; padding: 20px 20px 0 19px; border-bottom: 1px solid #e3e3e3; }
.search { height: 47px; border: 1px solid #ced4da; border-radius: 5px; background: #fff; color: #6c757d; font-size: 19px; line-height: 46px; padding-left: 15px; }
.stree { padding-top: 20px; font-size: 16px; }
.st { display: flex; align-items: center; padding-left: 14px; white-space: nowrap; }
.s1 { height: 31px; }
.s2 { height: 30px; }
.s3 { height: 30px; }
.s4 { height: 24px; align-items: flex-start; }
.t-o { width: 0; height: 0; border-top: 6px solid transparent; border-bottom: 6px solid transparent; border-left: 6px solid #ccc; margin-right: 7px; flex: none; }
.t-d { width: 0; height: 0; border-top: 5px solid transparent; border-bottom: 5px solid transparent; border-right: 7px solid #666; margin-right: 7px; flex: none; }
.w1 { width: 205px; }
.w2 { width: 170px; }
.w3 { width: 224px; margin-left: 21px; }
.w4a { width: 105px; margin-left: 48px; }
.w4b { width: 90px; }
.sky-row { display: flex; align-items: center; margin-left: 109px; width: 154px; height: 31px; background: #bfe8ff; padding-left: 30px; }
.mos-sky { display: block; height: 24px; flex: none; width: 110px; background-image: linear-gradient(90deg, #9ec5d6 0 10px, #7f9faf 10px 20px, #c0e6f8 20px 30px, #8aabb9 30px 40px, #75929f 40px 50px, #b5d5e4 50px 60px); background-size: 60px 100%; margin-left: 2px; }
.w6a { width: 170px; }
.w7 { width: 155px; }
.w8 { width: 200px; }
.w9 { width: 230px; height: 18px; }
.article { flex: 1; min-width: 0; padding: 41px 0 0 60px; overflow: hidden; }
.art-h1 { width: 752px; margin: 0 0 11px; font-size: 50px; line-height: 60px; font-weight: 400; color: #2a2a2a; font-family: "Noto Sans CJK SC", sans-serif; }
.art-p { width: 752px; margin: 0; font-size: 20px; line-height: 30px; color: #2a2a2a; }

.pscroll { width: 19px; flex: none; background: #f1f1f1; padding: 0 1px; }
.pscroll .arrow-up { margin: 8px auto 7px; border-bottom-color: #a3a3a3; }
.pthumb { height: 69px; background: #c1c1c1; }

.devtools { flex: 1; min-width: 0; border-left: 1px solid #cdcdcd; background: #fff; }
.dt-bar { height: 33px; background: #f3f3f3; border-bottom: 1px solid #ccc; display: flex; align-items: center; font-size: 14px; color: #444; }
.dt-i1 { margin-left: 12px; }
.dt-i2 { margin-left: 13px; }
.dt-sep { width: 1px; height: 22px; background: #ccc; margin-left: 15px; flex: none; }
.dt-sep.s2 { margin-left: 6px; }
.dt-tab { height: 33px; line-height: 32px; padding: 0 14.500px; flex: none; }
.dt-sep + .dt-tab { margin-left: 7px; }
.dt-tab.on { color: #222; border-bottom: 2px solid #1a73e8; }
.dt-more { margin-left: 17px; font-size: 17px; }
.dt-warn { margin-left: 20px; }
.dt-num { margin-left: 4px; }
.dt-keb { margin-left: 20px; }

.dom { height: 412px; overflow: hidden; font-family: "Liberation Mono", monospace; font-size: 13.400px; color: #222; white-space: nowrap; }
.dl { height: 19px; line-height: 19px; position: relative; }
.d0 { margin-top: -7px; padding-left: 63px; }
.d1 { padding-left: 78px; }
.d2 { padding-left: 92px; }
.dwrap { padding-left: 64px; }
.dl b { font-weight: normal; color: #a5559c; }
.dl em { font-style: normal; color: #881280; }
.dl s { text-decoration: none; color: #994500; }
.dl q { quotes: none; color: #1a1aa6; }
.dl q::before, .dl q::after { content: none; }
.dt-r, .dt-d { position: absolute; top: 5px; width: 0; height: 0; }
.d0 .dt-d { left: 53px; }
.d1 .dt-r, .d1 .dt-d { left: 68px; }
.d2 .dt-r, .d2 .dt-d { left: 82px; }
.dt-r { border-top: 5px solid transparent; border-bottom: 5px solid transparent; border-left: 7px solid #666; }
.dt-d { top: 6px; border-left: 5px solid transparent; border-right: 5px solid transparent; border-top: 7px solid #666; }
.dom-sel { position: relative; background: #dedede; height: 320px; padding: 0 0 0 109px; overflow: hidden; }
.dots { position: absolute; left: 3px; top: 2px; font-size: 8px; color: #777; }
.sel-text { white-space: pre; font: 15px/18px "Noto Sans Mono CJK SC", "Noto Sans CJK SC", monospace; margin-top: -1px; color: #2a2a2a; }

.ime { position: absolute; left: 1719px; top: 915px; width: 96px; height: 23px; background: #f6f6f6; display: flex; align-items: center; gap: 9px; border: 1px solid #bcc8d8; font-weight: 700; }
.ime-s { width: 25px; height: 25px; background: #f15a22; color: #fff; text-align: center; line-height: 24px; font-size: 21px; border-radius: 5px; font-family: "Liberation Sans", sans-serif; flex: none; margin-top: -2px; transform: rotate(-8deg); }
.ime-z { color: #e8731e; font-size: 15px; line-height: 1; }
.ime-d { color: #e8731e; font-size: 15px; line-height: 1; }
.taskbar { position: absolute; left: 0; bottom: 0; width: 100%; height: 4px; background: #222; }
```
